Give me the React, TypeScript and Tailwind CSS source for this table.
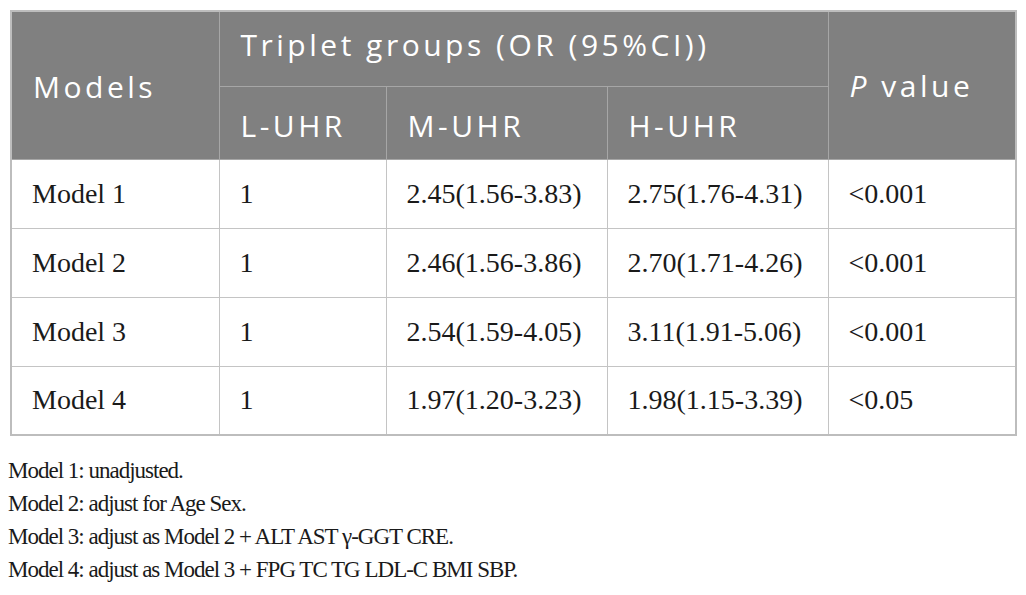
const rows = [
  { model: "Model 1", l: "1", m: "2.45(1.56-3.83)", h: "2.75(1.76-4.31)", p: "<0.001" },
  { model: "Model 2", l: "1", m: "2.46(1.56-3.86)", h: "2.70(1.71-4.26)", p: "<0.001" },
  { model: "Model 3", l: "1", m: "2.54(1.59-4.05)", h: "3.11(1.91-5.06)", p: "<0.001" },
  { model: "Model 4", l: "1", m: "1.97(1.20-3.23)", h: "1.98(1.15-3.39)", p: "<0.05" },
];

const notes = [
  "Model 1: unadjusted.",
  "Model 2: adjust for Age Sex.",
  "Model 3: adjust as Model 2 + ALT AST γ-GGT CRE.",
  "Model 4: adjust as Model 3 + FPG TC TG LDL-C BMI SBP.",
];

const head =
  "bg-[#808080] text-white text-left font-normal text-[30px] tracking-[3.5px] border border-[#a6a6a6] px-[21px] align-middle";
const cell =
  "border border-[#c4c4c4] px-[20px] text-[28px] text-[#1a1a1a] align-middle";

export default function App() {
  return (
    <div className="w-[1026px] h-[595px] bg-white pt-[10px] pl-[10px]">
      <table className="table-fixed border-collapse w-[1005px] border-2 border-[#bdbdbd] font-['Open_Sans',sans-serif]">
        <colgroup>
          <col className="w-[208px]" />
          <col className="w-[167px]" />
          <col className="w-[221px]" />
          <col className="w-[221px]" />
          <col className="w-[188px]" />
        </colgroup>
        <thead>
          <tr className="h-[75px]">
            <th rowSpan={2} className={`${head} pt-[2px]`}>
              Models
            </th>
            <th colSpan={3} className={`${head} pb-[8px]`}>
              Triplet groups (OR (95%CI))
            </th>
            <th rowSpan={2} className={`${head} tracking-[1.5px]`}>
              <i>P</i> value
            </th>
          </tr>
          <tr className="h-[73px]">
            <th className={`${head} pt-[5px]`}>L-UHR</th>
            <th className={`${head} pt-[5px]`}>M-UHR</th>
            <th className={`${head} pt-[5px]`}>H-UHR</th>
          </tr>
        </thead>
        <tbody className="font-['Liberation_Serif',serif]">
          {rows.map((r) => (
            <tr key={r.model} className="h-[69px]">
              <td className={cell}>{r.model}</td>
              <td className={cell}>{r.l}</td>
              <td className={cell}>{r.m}</td>
              <td className={cell}>{r.h}</td>
              <td className={cell}>{r.p}</td>
            </tr>
          ))}
        </tbody>
      </table>
      <div className="mt-[18px] font-['Liberation_Serif',serif] text-[23px] tracking-[-1px] leading-[33px] text-[#1a1a1a] -ml-[2px]">
        {notes.map((n) => (
          <div key={n}>{n}</div>
        ))}
      </div>
    </div>
  );
}
